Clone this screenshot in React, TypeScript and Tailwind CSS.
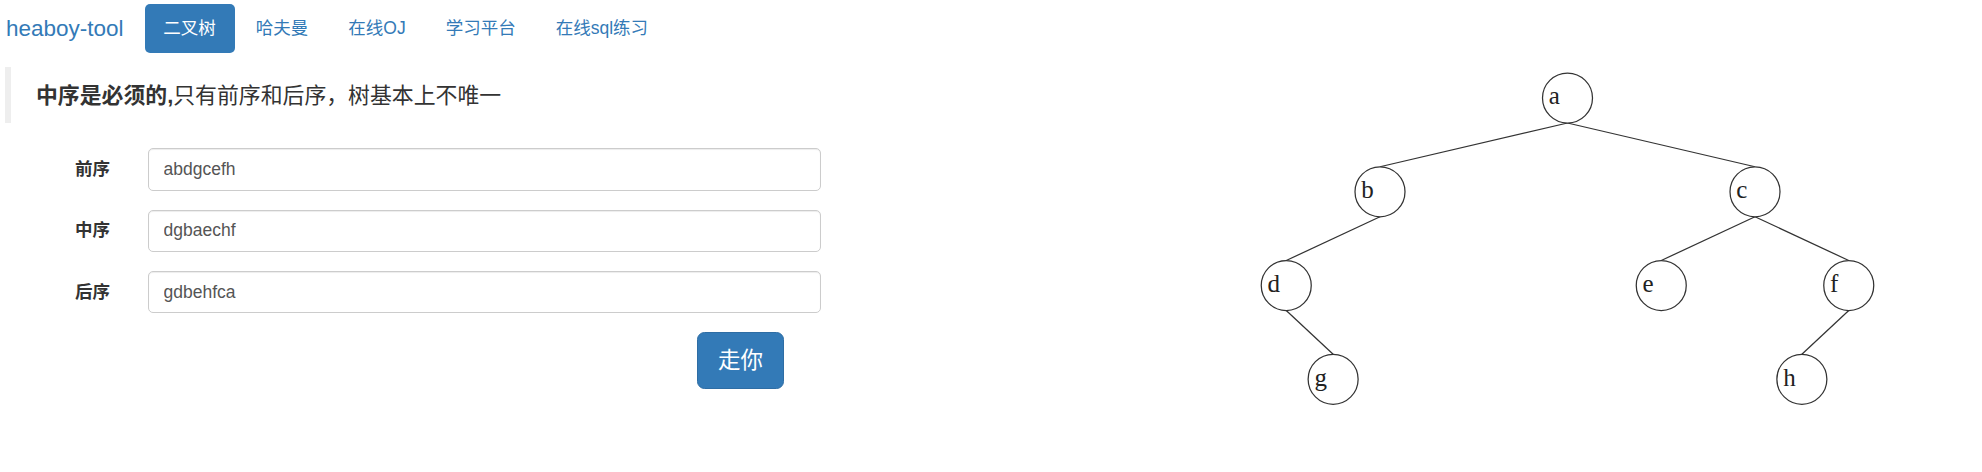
import React from "react";

type Node = { id: string; x: number; y: number };

const nodes: Node[] = [
  { id: "a", x: 1567.5, y: 98 },
  { id: "b", x: 1380, y: 191.75 },
  { id: "c", x: 1755, y: 191.75 },
  { id: "d", x: 1286.25, y: 285.5 },
  { id: "e", x: 1661.25, y: 285.5 },
  { id: "f", x: 1848.75, y: 285.5 },
  { id: "g", x: 1333.125, y: 379.25 },
  { id: "h", x: 1801.875, y: 379.25 },
];

const edges: [string, string][] = [
  ["a", "b"],
  ["a", "c"],
  ["b", "d"],
  ["c", "e"],
  ["c", "f"],
  ["d", "g"],
  ["f", "h"],
];

const R = 25;

function Tree() {
  const get = (id: string) => nodes.find((n) => n.id === id)!;
  return (
    <svg width={991} height={405} viewBox="991 67 991 405" className="block">
      {edges.map(([p, c]) => {
        const a = get(p);
        const b = get(c);
        return (
          <line
            key={p + c}
            x1={a.x}
            y1={a.y + R}
            x2={b.x}
            y2={b.y - R}
            stroke="#333"
            strokeWidth={1.25}
          />
        );
      })}
      {nodes.map((n) => (
        <g key={n.id}>
          <circle cx={n.x} cy={n.y} r={R} fill="white" stroke="#333" strokeWidth={1.25} />
          <text
            x={n.x - 18.75}
            y={n.y + 6.25}
            fontSize={25}
            fontFamily="'Liberation Serif', serif"
            fill="#222"
          >
            {n.id}
          </text>
        </g>
      ))}
    </svg>
  );
}

const pills = ["二叉树", "哈夫曼", "在线OJ", "学习平台", "在线sql练习"];

const fields = [
  { label: "前序", value: "abdgcefh" },
  { label: "中序", value: "dgbaechf" },
  { label: "后序", value: "gdbehfca" },
];

export default function App() {
  return (
    <div className="w-[1982px] h-[472px] overflow-hidden bg-white text-[#333] text-[17.5px] leading-[25px] font-['Liberation_Sans','Noto_Sans_CJK_SC',sans-serif]">
      <nav className="flex items-center pt-[4px] pl-[6px]">
        <a className="text-[22.5px] leading-[25px] text-[#337ab7] mr-[21px]">heaboy-tool</a>
        <ul className="flex items-center">
          {pills.map((p, i) => (
            <li key={p} className={i > 0 ? "ml-[2.5px]" : ""}>
              <a
                className={
                  i === 0
                    ? "block px-[18.75px] py-[12px] leading-[25px] rounded-[5px] bg-[#337ab7] text-white"
                    : "block px-[18.75px] py-[12px] leading-[25px] rounded-[5px] text-[#337ab7]"
                }
              >
                {p}
              </a>
            </li>
          ))}
        </ul>
      </nav>
      <div className="flex mt-[14px]">
        <div className="w-[991px] shrink-0 pl-[5px]">
          <blockquote className="border-l-[6.25px] border-[#eee] pl-[25px] py-[12.5px] text-[21.875px] leading-[31.25px] mb-[25px]">
            <b>中序是必须的,</b>只有前序和后序，树基本上不唯一
          </blockquote>
          <form className="w-[815.75px]">
            {fields.map((f) => (
              <div key={f.label} className="flex mb-[18.75px]">
                <label className="w-[105px] text-right font-bold pt-[8.75px] leading-[25px]">{f.label}</label>
                <input
                  defaultValue={f.value}
                  readOnly
                  className="ml-[37.5px] flex-1 h-[42.5px] px-[15px] border border-[#ccc] rounded-[5px] text-[#555] text-[17.5px] shadow-[inset_0_1px_1px_rgba(0,0,0,0.075)] outline-none"
                />
              </div>
            ))}
            <div className="flex justify-end pr-[36.75px]">
              <button
                type="button"
                className="px-[20px] py-[12.5px] text-[22.5px] leading-[30px] text-white bg-[#337ab7] border border-[#2e6da4] rounded-[7.5px]"
              >
                走你
              </button>
            </div>
          </form>
        </div>
        <div className="flex-1">
          <Tree />
        </div>
      </div>
    </div>
  );
}
